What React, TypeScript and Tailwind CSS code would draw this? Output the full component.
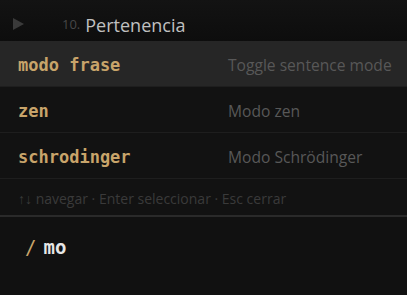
import React from "react";

const mono = { fontFamily: '"DejaVu Sans Mono", "Liberation Mono", monospace' };
const sans = { fontFamily: '"Open Sans", "Noto Sans", sans-serif' };

function Row({ cmd, desc, active }: { cmd: string; desc: string; active?: boolean }) {
  return (
    <div
      className={`flex items-center h-[46px] pt-[4px] border-b border-[#1e1e1e] ${active ? "bg-[#262626]" : "bg-[#121212]"}`}
    >
      <div className="w-[228px] pl-[18px] text-[17px] font-bold text-[#c8a46a]" style={mono}>
        {cmd}
      </div>
      <div className="text-[15.6px] text-[#585858]" style={sans}>
        {desc}
      </div>
    </div>
  );
}

export default function App() {
  return (
    <div className="w-[407px] h-[295px] bg-[#111111] overflow-hidden flex flex-col">
      <div className="h-[41px] flex items-center pt-[9px] bg-gradient-to-b from-[#131313] to-[#0d0d0d]" style={sans}>
        <svg width="11" height="12" viewBox="0 0 11 12" className="ml-[13px] -mt-[3px]">
          <polygon points="0,0 11,6 0,12" fill="#3a3a3a" />
        </svg>
        <span className="ml-[38px] text-[13px] text-[#474747]">10.</span>
        <span className="ml-[5px] text-[18px] text-[#c0c0c0]">Pertenencia</span>
      </div>
      <div className="flex flex-col">
        <Row cmd="modo frase" desc="Toggle sentence mode" active />
        <Row cmd="zen" desc="Modo zen" />
        <Row cmd="schrodinger" desc="Modo Schrödinger" />
        <div className="h-[36px] flex items-center pt-[3px] pl-[18px] bg-[#121212] text-[14px] text-[#3a3a3a]" style={sans}>
          ↑↓ navegar · Enter seleccionar · Esc cerrar
        </div>
        <div className="h-[2px] bg-[#2a2a2a]" />
      </div>
      <div className="flex items-center pt-[16px] pl-[25px]">
        <span className="text-[19px] text-[#c8a46a]" style={mono}>/</span>
        <span className="ml-[7px] text-[19px] font-bold text-[#e6e6e6]" style={mono}>mo</span>
      </div>
    </div>
  );
}
